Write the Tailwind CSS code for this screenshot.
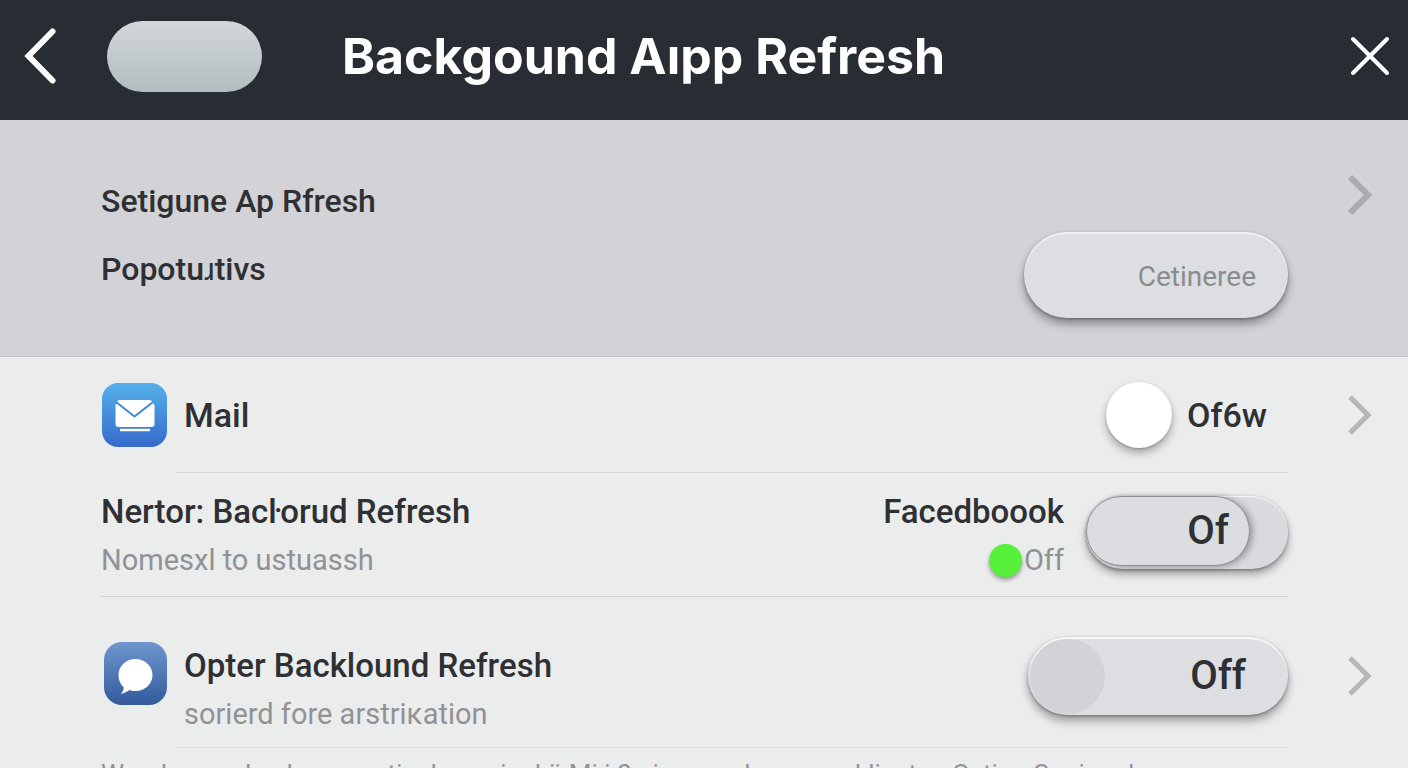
<!DOCTYPE html>
<html lang="en">
<head>
    <meta charset="UTF-8">
    <meta name="viewport" content="width=device-width, initial-scale=1.0">
    <title>Background App Refresh</title>
    <script src="https://cdn.jsdelivr.net/npm/@tailwindcss/browser@4"></script>
</head>
<body class="h-screen overflow-hidden bg-[#ebecec] font-['Roboto',sans-serif] text-[#2e3033]">
    <!-- Header -->
    <header class="flex h-[120px] items-center bg-[#282d33] pb-2 text-white">
        <button type="button" aria-label="Back" class="ml-6">
            <svg class="h-14 w-8" viewBox="0 0 32 56" fill="none" stroke="currentColor" stroke-width="6" stroke-linecap="round" stroke-linejoin="miter">
                <path d="M28.5 3.5L4.5 28l24 24.5"/>
            </svg>
        </button>
        <button type="button" aria-label="Menu" class="ml-[51px] h-[71px] w-[155px] rounded-full bg-linear-to-b from-[#d3d7da] to-[#b2bdbf]"></button>
        <h1 class="ml-20 text-[50px] leading-[60px] font-bold font-['Inter',sans-serif]">Backgound Aıpp Refresh</h1>
        <button type="button" aria-label="Close" class="mr-[18px] ml-auto">
            <svg class="size-10" viewBox="0 0 40 40" fill="none" stroke="currentColor" stroke-width="4" stroke-linecap="round">
                <path d="M3 3l34 34M37 3L3 37"/>
            </svg>
        </button>
    </header>

    <main>
        <!-- Summary -->
        <section class="flex h-[237px] border-b border-[#bfc0c3] bg-[#d2d2d7] pl-[101px]">
            <div class="flex flex-1 justify-between">
                <div class="pt-[47px]">
                    <h2 class="text-[32px] leading-[68px] font-medium">Setigune Ap Rfresh</h2>
                    <p class="text-[32px] leading-[68px] font-medium">Popotu&#x279;tivs</p>
                </div>
                <button type="button" class="mb-[38px] h-[86px] w-[264px] self-end rounded-full bg-[#dddee2] pt-1 pr-8 text-right text-[28px] text-[#8b8c8f] shadow-[0_6px_10px_rgba(0,0,0,0.35),0_1px_3px_rgba(0,0,0,0.3),inset_0_2px_1px_rgba(255,255,255,0.6)]">Cetineree</button>
            </div>
            <a href="#" aria-label="Open summary" class="w-[120px] pt-[55px] pl-[60px] text-[#a9abae]">
                <svg class="h-10 w-6" viewBox="0 0 24 40" fill="none" stroke="currentColor" stroke-width="6">
                    <path d="M2 2l18 18L2 38"/>
                </svg>
            </a>
        </section>

        <!-- Mail -->
        <section class="flex h-[115px] items-center pl-[101px]">
            <svg class="size-[66px]" viewBox="0 0 66 66">
                <defs>
                    <linearGradient id="mailFill" x1="0" y1="0" x2="0" y2="1">
                        <stop offset="0" stop-color="#55b0ea"/>
                        <stop offset="1" stop-color="#356acb"/>
                    </linearGradient>
                </defs>
                <rect x="1" y="1" width="65" height="64" rx="16" fill="url(#mailFill)"/>
                <path d="M18 18h30q3 0 4 3 1.500 1 1.500 3v18q0 3-3 3h-33q-3 0-3-3V24q0-2 1.500-3 0-3 3-3z" fill="#fff"/>
                <path d="M15 20l18.500 14.500L52 20" fill="none" stroke="#3f8bd8" stroke-width="2"/>
                <path d="M19 48h30" stroke="#fff" stroke-width="2.500"/>
            </svg>
            <h2 class="ml-[17px] flex-1 text-[34px] leading-[48px] font-medium">Mail</h2>
            <label class="relative flex w-[182px] items-center gap-[15px] text-[34px] leading-[48px] font-medium">
                <input type="checkbox" class="sr-only">
                <span class="size-[66px] rounded-full bg-white shadow-[0_5px_8px_rgba(0,0,0,0.3),0_1px_2px_rgba(0,0,0,0.2)]"></span>
                Of6w
            </label>
            <a href="#" aria-label="Open Mail" class="w-[120px] pl-[60px] text-[#b5b6b8]">
                <svg class="h-10 w-6" viewBox="0 0 24 40" fill="none" stroke="currentColor" stroke-width="5">
                    <path d="M2 2l18 18L2 38"/>
                </svg>
            </a>
        </section>
        <hr class="mr-[120px] ml-44 border-[#d8d9da]">

        <!-- Facebook -->
        <section class="mr-[120px] ml-[101px] flex h-[123px] pt-[15px]">
            <div class="flex-1">
                <h2 class="text-[33px] leading-[48px] font-medium">Nertor: Bacŀorud Refresh</h2>
                <p class="text-[29px] leading-[48px] text-[#919295]">Nomesxl to ustuassh</p>
            </div>
            <div class="flex flex-col items-end">
                <h2 class="text-[33px] leading-[48px] font-medium">Facedboook</h2>
                <p class="flex items-center gap-[2px] text-[29px] leading-[48px] text-[#919295]">
                    <span class="size-[33px] rounded-full bg-[#57f03a] shadow-[0_3px_4px_rgba(0,0,0,0.35)]"></span>
                    Off
                </p>
            </div>
            <label class="relative mt-2 ml-[22px] h-[73px] w-[202px] rounded-full bg-[#d9dadd] shadow-[0_5px_9px_rgba(0,0,0,0.35),0_1px_3px_rgba(0,0,0,0.3),inset_0_1px_1px_rgba(255,255,255,0.8)]">
                <input type="checkbox" aria-label="Facedboook" class="sr-only">
                <span class="flex h-[70px] w-[164px] items-center justify-end rounded-full border border-[#8f9093] bg-[#dcdde1] pr-5 text-[40px] leading-[48px] font-medium shadow-[3px_1px_6px_rgba(0,0,0,0.3)]">Of</span>
            </label>
        </section>
        <hr class="mr-[120px] ml-[100px] border-[#d0d1d2]">

        <!-- Messages -->
        <section class="flex h-[150px] pl-[101px]">
            <svg class="mt-[45px] h-[64px] w-[66px]" viewBox="0 0 66 64">
                <defs>
                    <linearGradient id="chatFill" x1="0" y1="0" x2="0" y2="1">
                        <stop offset="0" stop-color="#6d97cd"/>
                        <stop offset="1" stop-color="#335a9d"/>
                    </linearGradient>
                </defs>
                <rect x="3" y="0" width="63" height="63" rx="18" fill="url(#chatFill)"/>
                <path d="M34.500 17c9.500 0 17 7 17 16s-7.500 16-17 16c-2.500 0-4.500-.3-6-1-2.500 1.700-5 3-8.500 4 1.500-2 2.500-4 2.800-6.500C19.500 42.500 17.500 38 17.500 33c0-9 7.500-16 17-16z" fill="#fff"/>
            </svg>
            <div class="ml-[17px] flex-1 pt-[45px]">
                <h2 class="text-[33px] leading-[48px] font-medium">Opter Backlound Refresh</h2>
                <p class="text-[29px] leading-[48px] text-[#919295]">sorierd fore arstriκation</p>
            </div>
            <label class="relative mt-10 flex h-[78px] w-[260px] items-center justify-between rounded-full bg-[#dddee2] pr-[42px] pl-[2px] shadow-[0_6px_10px_rgba(0,0,0,0.35),0_1px_3px_rgba(0,0,0,0.3),inset_0_2px_1px_rgba(255,255,255,0.8)]">
                <input type="checkbox" aria-label="Opter Backlound Refresh" class="sr-only">
                <span class="size-[75px] rounded-full bg-[#d2d3d7]"></span>
                <span class="text-[40px] leading-[48px] font-medium">Off</span>
            </label>
            <a href="#" aria-label="Open Messages" class="w-[120px] pt-[59px] pl-[60px] text-[#b5b6b8]">
                <svg class="h-10 w-6" viewBox="0 0 24 40" fill="none" stroke="currentColor" stroke-width="5">
                    <path d="M2 2l18 18L2 38"/>
                </svg>
            </a>
        </section>
        <hr class="mr-[120px] ml-44 border-[#d8d9da]">

        <p class="ml-[101px] pt-[10px] text-[26px] leading-8 whitespace-nowrap text-[#919295]">Wsod: masol apla paop rtisola ospiosl ö Mi i 0 ni ap aoolop wana klisatan Catiuo Sooisool mow aooooo</p>
    </main>
</body>
</html>
